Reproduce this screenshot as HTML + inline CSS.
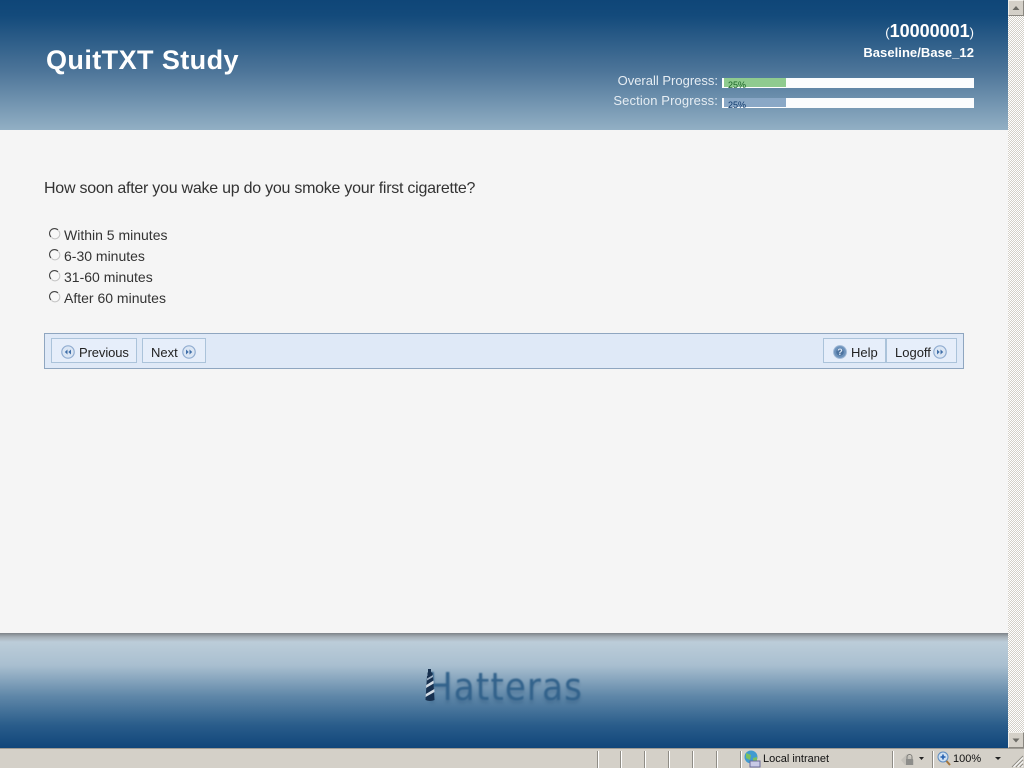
<!DOCTYPE html>
<html><head><meta charset="utf-8"><title>QuitTXT Study</title>
<style>
html,body{margin:0;padding:0;width:1024px;height:768px;overflow:hidden;background:#f5f5f5;font-family:"Liberation Sans",sans-serif}
.a{position:absolute;white-space:nowrap}
#hdr{left:0;top:0;width:1008px;height:130px;background:linear-gradient(#0f4678 0,#134a7b 12%,#4d7599 55%,#92afc4 100%)}
#ftr{left:0;top:633px;width:1008px;height:115px;background:linear-gradient(#7d8388 0,#a6b0b8 4px,#bccdd9 9px,#a9bfd0 28%,#5f87a8 55%,#2a5d8b 80%,#10467a 100%)}
.lbl{color:#e6edf3;font-size:13px;right:306px}
.bar{left:722px;width:252px;height:10px;background:#fbfcfd}
.fill{left:0;top:0;width:64px;height:10px;box-sizing:border-box;border-left:2px solid #fff;border-bottom:1px solid #fff}
.pct{font-size:9px;left:6px;top:2px;line-height:10px}
.opt{left:64px;font-size:14px;color:#333;line-height:16px}
.btn{top:338px;height:25px;box-sizing:border-box;border:1px solid #abc3da;background:#e6eefa;font-size:13px;color:#222;line-height:27px}
.ic{top:345px;width:14px;height:14px}
#sb{left:1008px;top:0;width:16px;height:748px;background-color:#f2f1ee;background-image:repeating-conic-gradient(#d4d0c8 0 25%,#fff 0 50%);background-size:2px 2px}
.sbb{left:1008px;width:16px;height:16px;box-sizing:border-box;background:#d4d0c8;border:1px solid;border-color:#f0eee9 #8a8780 #8a8780 #f0eee9}
#st{left:0;top:748px;width:1024px;height:20px;background:#d4d0c8;border-top:1px solid #9e9b94;box-sizing:border-box}
.sep{top:751px;width:1px;height:17px;background:#8f8c85;border-right:1px solid #fff}
</style></head><body>
<div class="a" id="hdr"></div>
<div class="a" style="left:46px;top:43px;font-size:27px;font-weight:bold;color:#fff;line-height:34px;letter-spacing:.42px">QuitTXT Study</div>
<div class="a" style="right:50px;top:21px;color:#fff;font-weight:bold;font-size:18px;line-height:20px"><span style="font-size:13px;font-weight:normal">(</span>10000001<span style="font-size:13px;font-weight:normal">)</span></div>
<div class="a" style="right:50px;top:45px;color:#fff;font-weight:bold;font-size:13px;line-height:16px;letter-spacing:.05px">Baseline/Base_12</div>
<div class="a lbl" style="top:73px;line-height:16px">Overall Progress:</div>
<div class="a lbl" style="top:93px;line-height:16px;letter-spacing:.12px">Section Progress:</div>
<div class="a bar" style="top:78px"><div class="a fill" style="background:#8fcb8f"></div><div class="a pct" style="color:#1a6326">25%</div></div>
<div class="a bar" style="top:98px"><div class="a fill" style="background:#8aa8c6"></div><div class="a pct" style="color:#0f386b">25%</div></div>

<div class="a" style="left:44px;top:180px;font-size:16px;line-height:18px;color:#333;letter-spacing:-.25px">How soon after you wake up do you smoke your first cigarette?</div>

<svg class="a" style="left:48px;top:227px" width="14" height="84">
<defs><g id="r"><circle cx="6.500" cy="6.500" r="4.800" fill="#f8f8f8"/><path d="M3 10A4.800 4.800 0 0 1 10 3" fill="none" stroke="#444" stroke-width="1.100"/><path d="M10.400 3.500A4.800 4.800 0 0 1 3.500 10.400" fill="none" stroke="#c4c4c4" stroke-width="1"/></g></defs>
<use href="#r"/><use href="#r" y="21"/><use href="#r" y="42"/><use href="#r" y="63"/>
</svg>
<div class="a opt" style="top:227px">Within 5 minutes</div>
<div class="a opt" style="top:248px">6-30 minutes</div>
<div class="a opt" style="top:269px">31-60 minutes</div>
<div class="a opt" style="top:290px">After 60 minutes</div>

<div class="a" style="left:44px;top:333px;width:920px;height:36px;box-sizing:border-box;border:1px solid #8fa6c0;background:#dfe9f7"></div>
<div class="a btn" style="left:51px;width:86px;padding-left:27px;letter-spacing:-.1px">Previous</div>
<div class="a btn" style="left:142px;width:64px;padding-left:8px">Next</div>
<div class="a btn" style="left:823px;width:63px;padding-left:27px">Help</div>
<div class="a btn" style="left:886px;width:71px;padding-left:8px;border-left:1px solid #abc3da">Logoff</div>

<svg class="a ic" style="left:61px"><circle cx="7" cy="7" r="6.200" fill="#dbe6f4" stroke="#90acd0" stroke-width="1.200"/><path d="M6.500 4.500v5L3.800 7zM10 4.500v5L7.300 7z" fill="#3f6ea8"/></svg>
<svg class="a ic" style="left:182px"><circle cx="7" cy="7" r="6.200" fill="#dbe6f4" stroke="#90acd0" stroke-width="1.200"/><path d="M4 4.500v5L6.700 7zM7.500 4.500v5L10.200 7z" fill="#3f6ea8"/></svg>
<svg class="a ic" style="left:833px"><circle cx="7" cy="7" r="6.400" fill="#6d92bb" stroke="#9cb6d4"/><circle cx="7" cy="7" r="3.800" fill="#4d739f"/><text x="7" y="10.200" font-size="9" font-weight="bold" fill="#dfe9f5" text-anchor="middle" font-family="Liberation Sans">?</text></svg>
<svg class="a ic" style="left:933px"><circle cx="7" cy="7" r="6.200" fill="#dbe6f4" stroke="#90acd0" stroke-width="1.200"/><path d="M4 4.500v5L6.700 7zM7.500 4.500v5L10.200 7z" fill="#3f6ea8"/></svg>

<div class="a" id="ftr"></div>
<div class="a" style="left:427px;top:664px;font-family:'DejaVu Sans',sans-serif;font-size:38px;line-height:46px;color:#32628b;letter-spacing:1.200px;transform:scaleX(.9);transform-origin:left top;filter:blur(.9px);text-shadow:0 3px 3px rgba(30,70,110,.25)">Hatteras</div>
<svg class="a" style="left:423px;top:668px" width="14" height="35">
<path d="M5 1h3v3l1.500 1v3l.5 0 1.500 24q-4.500 2-9 0l1.500-24h.5V5L5 4z" fill="#17304f"/><path d="M3.300 17l7.200-4.500.2 3-7.700 4.500zM2.800 26l8.500-5 .2 3-8.900 5z" fill="#d4dde6"/><path d="M4 10.500l6-3.500v2l-6 3.500z" fill="#9db0c4"/>
</svg>

<div class="a" id="sb"></div>
<div class="a sbb" style="top:0"><svg width="14" height="14"><path d="M3.500 9h7L7 5z" fill="#6b6a65"/></svg></div>
<div class="a sbb" style="top:732px"><svg width="14" height="14"><path d="M3.500 5.500h7L7 9.500z" fill="#6b6a65"/></svg></div>

<div class="a" id="st"></div>
<div class="a sep" style="left:597px"></div><div class="a sep" style="left:620px"></div><div class="a sep" style="left:644px"></div><div class="a sep" style="left:668px"></div><div class="a sep" style="left:692px"></div><div class="a sep" style="left:716px"></div><div class="a sep" style="left:740px"></div><div class="a sep" style="left:892px"></div><div class="a sep" style="left:932px"></div>
<svg class="a" style="left:743px;top:750px" width="18" height="18"><circle cx="8" cy="7" r="6.500" fill="#3f9bd0"/><path d="M3 3l5 2-1 5-4-2zM10 8l4-1 0 4-4 1z" fill="#7ac060"/><rect x="7" y="11" width="10" height="6" fill="#c8c9e6" stroke="#6a6a99"/></svg>
<div class="a" style="left:763px;top:752px;font-size:11px;line-height:14px;color:#111">Local intranet</div>
<svg class="a" style="left:900px;top:751px" width="28" height="16"><path d="M1 9l6-6 7 6v5H5z" fill="#c4c1ba"/><rect x="6" y="8" width="7" height="6" fill="#8d8d8a"/><path d="M7 8V6a2.500 2.500 0 0 1 5 0v2" fill="none" stroke="#7c7c78"/><path d="M19 6h5l-2.500 3z" fill="#222"/></svg>
<svg class="a" style="left:937px;top:751px" width="15" height="16"><circle cx="6" cy="6" r="5" fill="#cfe0f2" stroke="#5b8bc0"/><path d="M3.500 6h5M6 3.500v5" stroke="#235fae" stroke-width="1.600"/><path d="M9.500 10l3.500 4" stroke="#a5753b" stroke-width="2"/></svg>
<div class="a" style="left:953px;top:752px;font-size:11px;line-height:14px;color:#111">100%</div>
<svg class="a" style="left:994px;top:756px" width="8" height="5"><path d="M1 1h6L4 4z" fill="#222"/></svg>
<svg class="a" style="left:1011px;top:755px" width="13" height="13"><path d="M12 1L1 12M12 5L5 12M12 9L9 12" stroke="#8f8c85"/><path d="M12 2.500L2.500 12M12 6.500L6.500 12M12 10.500L10.500 12" stroke="#fff"/></svg>
</body></html>
